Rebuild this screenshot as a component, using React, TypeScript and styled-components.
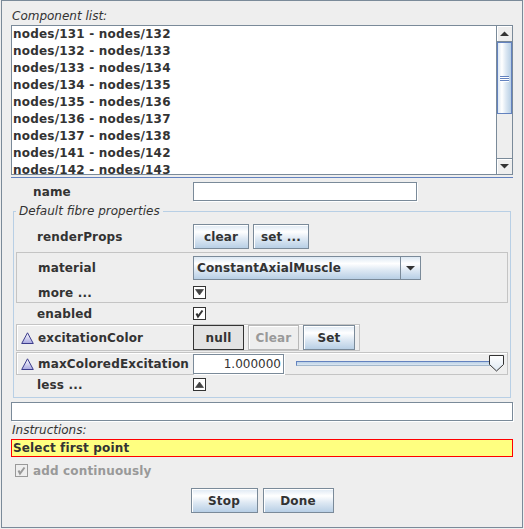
import React from 'react';
import styled, { createGlobalStyle, css } from 'styled-components';

const Global = createGlobalStyle`
  html, body { margin: 0; padding: 0; background: #eeeeee; }
  body { font-family: "DejaVu Sans", sans-serif; font-size: 12px; color: #333333; }
  * { box-sizing: border-box; }
`;

const metalGradient = (dir: string) =>
  `linear-gradient(${dir}, #dde8f3 0%, #ffffff 30%, #dde8f3 60%, #b8cfe5 100%)`;

const Frame = styled.div`
  margin-left: 1px;
  width: 522px;
  height: 528px;
  border: 1px solid #7a8a99;
  padding: 6px 9px 0 9px;
  display: flex;
  flex-direction: column;
`;

const Caption = styled.div`
  font-style: italic;
  height: 18px;
  line-height: 18px;
  padding-left: 1px;
`;

const ListBox = styled.div`
  height: 150px;
  border: 1px solid #7a8a99;
  background: #ffffff;
  display: flex;
`;

const ListItems = styled.div`
  flex: 1;
  overflow: hidden;
  padding-left: 1px;
`;

const ListItem = styled.div`
  height: 17px;
  line-height: 17px;
  font-weight: bold;
  letter-spacing: 0.2px;
  white-space: nowrap;
`;

const ScrollBar = styled.div`
  width: 16px;
  display: flex;
  flex-direction: column;
  background: #eeeeee;
  border-left: 1px solid #7a8a99;
`;

const ScrollButton = styled.div`
  height: 16px;
  display: flex;
  align-items: center;
  justify-content: center;
  background: #eeeeee;
  border-bottom: 1px solid #7a8a99;
  box-shadow: inset 1px 1px 0 #ffffff;
  &:last-child { border-bottom: none; border-top: 1px solid #7a8a99; }
`;

const ScrollThumb = styled.div`
  height: 72px;
  border: 1px solid #6382bf;
  background: ${metalGradient('to right')};
  display: flex;
  flex-direction: column;
  align-items: center;
  justify-content: center;
  gap: 1px;
`;

const Grip = styled.div`
  width: 9px;
  height: 1px;
  background: #6382bf;
  box-shadow: 0 1px 0 #ffffff;
`;

const ScrollTrack = styled.div`
  flex: 1;
  background: #eeeeee;
`;

const Separator = styled.div`
  margin-top: 2px;
  height: 1px;
  background: #6382bf;
`;

const PropRow = styled.div<{ $h: number; $lw: number }>`
  display: grid;
  grid-template-columns: ${(p) => p.$lw}px 1fr;
  align-items: center;
  height: ${(p) => p.$h}px;
`;

const Label = styled.div<{ $pad: number }>`
  padding-left: ${(p) => p.$pad}px;
  font-weight: bold;
  letter-spacing: 0.15px;
  white-space: nowrap;
  display: flex;
  align-items: center;
  gap: 4px;
`;

const Value = styled.div`
  display: flex;
  align-items: center;
  gap: 4px;
`;

const TextField = styled.div<{ $w?: number; $h?: number }>`
  ${(p) => (p.$w ? `width: ${p.$w}px;` : 'width: 100%;')}
  height: ${(p) => p.$h ?? 19}px;
  flex-shrink: 0;
  background: #ffffff;
  border: 1px solid #7a8a99;
  box-shadow: 1px 1px 0 #ffffff;
  padding: 0 2px;
  line-height: ${(p) => (p.$h ?? 19) - 2}px;
  text-align: right;
  white-space: nowrap;
`;

const TitledBox = styled.div`
  position: relative;
  margin: 6px 2px 0 2px;
  border: 1px solid #b8cfe5;
  padding: 10px 0 3px 0;
`;

const Legend = styled.div`
  position: absolute;
  top: -8px;
  left: 2px;
  padding: 0 3px;
  height: 14px;
  line-height: 14px;
  font-style: italic;
  background: #eeeeee;
`;

const Button = styled.button<{ $w: number; $variant?: 'normal' | 'flat' | 'disabled' }>`
  width: ${(p) => p.$w}px;
  height: 25px;
  padding: 0;
  margin: 0;
  font: bold 12px "DejaVu Sans", sans-serif;
  letter-spacing: 0.15px;
  color: #333333;
  border: 1px solid #7a8a99;
  background: ${metalGradient('to bottom')};
  box-shadow: inset 1px 1px 0 #ffffff;
  ${(p) =>
    p.$variant === 'flat' &&
    css`
      border-color: #333333;
      background: #e3e3e3;
      box-shadow: none;
    `}
  ${(p) =>
    p.$variant === 'disabled' &&
    css`
      border-color: #b8b8b8;
      background: #eeeeee;
      color: #999999;
    `}
`;

const GroupPanel = styled.div`
  margin: 1px 2px 0 2px;
  border: 1px solid #c4c4c4;
`;

const RowPanel = styled.div<{ $w?: number; $mt?: number }>`
  margin: ${(p) => p.$mt ?? 0}px 2px 0 2px;
  ${(p) => (p.$w ? `width: ${p.$w}px;` : '')}
  border: 1px solid #c4c4c4;
  box-shadow: inset 1px 1px 0 #ffffff;
`;

const Combo = styled.div`
  width: 228px;
  height: 24px;
  display: flex;
  border: 1px solid #7a8a99;
  background: ${metalGradient('to bottom')};
`;

const ComboText = styled.div`
  flex: 1;
  font-weight: bold;
  letter-spacing: 0.15px;
  line-height: 22px;
  padding-left: 3px;
  border-right: 1px solid #7a8a99;
`;

const ComboArrow = styled.div`
  width: 19px;
  display: flex;
  align-items: center;
  justify-content: center;
`;

const SliderBox = styled.div`
  position: relative;
  flex: 1;
  height: 17px;
  margin: 0 3px 0 8px;
  display: flex;
  align-items: center;
`;

const SliderTrack = styled.div`
  flex: 1;
  height: 5px;
  margin-right: 6px;
  border: 1px solid #6382bf;
  border-bottom-color: #a3b8cc;
  background: linear-gradient(to bottom, #b8cfe5, #dde8f3);
`;

const SliderThumb = styled.svg`
  position: absolute;
  right: 0;
  top: 0;
`;

const StatusBox = styled.div`
  height: 18px;
  background: #ffff80;
  border: 1px solid #ff0000;
  font-weight: bold;
  letter-spacing: 0.15px;
  line-height: 16px;
  padding-left: 1px;
`;

const CheckRow = styled.div`
  margin-top: 3px;
  height: 21px;
  display: flex;
  align-items: center;
  gap: 5px;
  padding-left: 4px;
  font-weight: bold;
  letter-spacing: 0.15px;
  color: #999999;
`;

const ButtonRow = styled.div`
  margin-top: 7px;
  display: flex;
  justify-content: center;
  gap: 5px;
`;

const Spacer = styled.div<{ $h: number }>`
  height: ${(p) => p.$h}px;
`;

const ArrowBox = ({ up }: { up?: boolean }) => (
  <svg width="13" height="13" viewBox="0 0 13 13">
    <rect x="0.5" y="0.5" width="12" height="12" fill="#ffffff" stroke="#333333" />
    {up ? (
      <path d="M2.5 9.5 H10.5 L6.5 4 Z" fill="#444444" stroke="#333333" strokeWidth="0.6" />
    ) : (
      <path d="M2.5 3.5 H10.5 L6.5 9 Z" fill="#444444" stroke="#333333" strokeWidth="0.6" />
    )}
  </svg>
);

const CheckBox = ({ disabled }: { disabled?: boolean }) => {
  const c = disabled ? '#999999' : '#333333';
  return (
    <svg width="13" height="13" viewBox="0 0 13 13">
      <rect x="0.5" y="0.5" width="12" height="12" fill={disabled ? '#eeeeee' : '#ffffff'} stroke={c} />
      <path d="M3.5 6.5 L5 9.5 L9.5 3.5" fill="none" stroke={c} strokeWidth="2" />
    </svg>
  );
};

const SmallArrow = ({ up }: { up?: boolean }) => (
  <svg width="9" height="5" viewBox="0 0 9 5">
    {up ? <path d="M0 5 H9 L4.5 0.5 Z" fill="#333333" /> : <path d="M0 0 H9 L4.5 4.5 Z" fill="#333333" />}
  </svg>
);

const PropIcon = () => (
  <svg width="13" height="12" viewBox="0 0 13 12">
    <defs>
      <linearGradient id="ptri" x1="0" y1="0" x2="0" y2="1">
        <stop offset="0" stopColor="#ffffff" />
        <stop offset="1" stopColor="#a8a8e0" />
      </linearGradient>
    </defs>
    <path d="M6.5 0.8 L12.3 11.5 H0.7 Z" fill="url(#ptri)" stroke="#3c3c8c" strokeWidth="1" />
  </svg>
);

const items = [
  'nodes/131 - nodes/132',
  'nodes/132 - nodes/133',
  'nodes/133 - nodes/134',
  'nodes/134 - nodes/135',
  'nodes/135 - nodes/136',
  'nodes/136 - nodes/137',
  'nodes/137 - nodes/138',
  'nodes/141 - nodes/142',
  'nodes/142 - nodes/143',
];

export default function App() {
  return (
    <>
      <Global />
      <Frame>
        <Caption>Component list:</Caption>
        <ListBox>
          <ListItems>
            {items.map((t) => (
              <ListItem key={t}>{t}</ListItem>
            ))}
          </ListItems>
          <ScrollBar>
            <ScrollButton>
              <SmallArrow up />
            </ScrollButton>
            <ScrollThumb>
              <Grip />
              <Grip />
              <Grip />
            </ScrollThumb>
            <ScrollTrack />
            <ScrollButton>
              <SmallArrow />
            </ScrollButton>
          </ScrollBar>
        </ListBox>
        <Separator />
        <PropRow $h={27} $lw={182}>
          <Label $pad={22}>name</Label>
          <Value>
            <TextField $w={224} />
          </Value>
        </PropRow>
        <TitledBox>
          <Legend>Default fibre properties</Legend>
          <PropRow $h={29} $lw={179}>
            <Label $pad={23}>renderProps</Label>
            <Value>
              <Button $w={56}>clear</Button>
              <Button $w={56}>set ...</Button>
            </Value>
          </PropRow>
          <GroupPanel>
            <PropRow $h={30} $lw={176}>
              <Label $pad={21}>material</Label>
              <Value>
                <Combo>
                  <ComboText>ConstantAxialMuscle</ComboText>
                  <ComboArrow>
                    <SmallArrow />
                  </ComboArrow>
                </Combo>
              </Value>
            </PropRow>
            <PropRow $h={19} $lw={176}>
              <Label $pad={21}>more ...</Label>
              <Value>
                <ArrowBox />
              </Value>
            </PropRow>
          </GroupPanel>
          <PropRow $h={21} $lw={179}>
            <Label $pad={23}>enabled</Label>
            <Value>
              <CheckBox />
            </Value>
          </PropRow>
          <RowPanel $w={344}>
            <PropRow $h={25} $lw={176}>
              <Label $pad={4}>
                <PropIcon />
                excitationColor
              </Label>
              <Value>
                <Button $w={51} $variant="flat">null</Button>
                <Button $w={51} $variant="disabled">Clear</Button>
                <Button $w={52}>Set</Button>
              </Value>
            </PropRow>
          </RowPanel>
          <RowPanel $mt={1}>
            <PropRow $h={21} $lw={176}>
              <Label $pad={4}>
                <PropIcon />
                maxColoredExcitation
              </Label>
              <Value>
                <TextField $w={91} $h={20}>1.000000</TextField>
                <SliderBox>
                  <SliderTrack />
                  <SliderThumb width="15" height="17" viewBox="0 0 15 17">
                    <defs>
                      <linearGradient id="thumbg" x1="0" y1="0" x2="0" y2="1">
                        <stop offset="0" stopColor="#ffffff" />
                        <stop offset="1" stopColor="#dde8f3" />
                      </linearGradient>
                    </defs>
                    <path d="M0.5 0.5 H14.5 V9.5 L7.5 16 L0.5 9.5 Z" fill="url(#thumbg)" stroke="#333333" />
                  </SliderThumb>
                </SliderBox>
              </Value>
            </PropRow>
          </RowPanel>
          <PropRow $h={19} $lw={179}>
            <Label $pad={23}>less ...</Label>
            <Value>
              <ArrowBox up />
            </Value>
          </PropRow>
        </TitledBox>
        <Spacer $h={4} />
        <TextField />
        <Caption>Instructions:</Caption>
        <StatusBox>Select first point</StatusBox>
        <CheckRow>
          <CheckBox disabled />
          add continuously
        </CheckRow>
        <ButtonRow>
          <Button $w={67}>Stop</Button>
          <Button $w={71}>Done</Button>
        </ButtonRow>
      </Frame>
    </>
  );
}
